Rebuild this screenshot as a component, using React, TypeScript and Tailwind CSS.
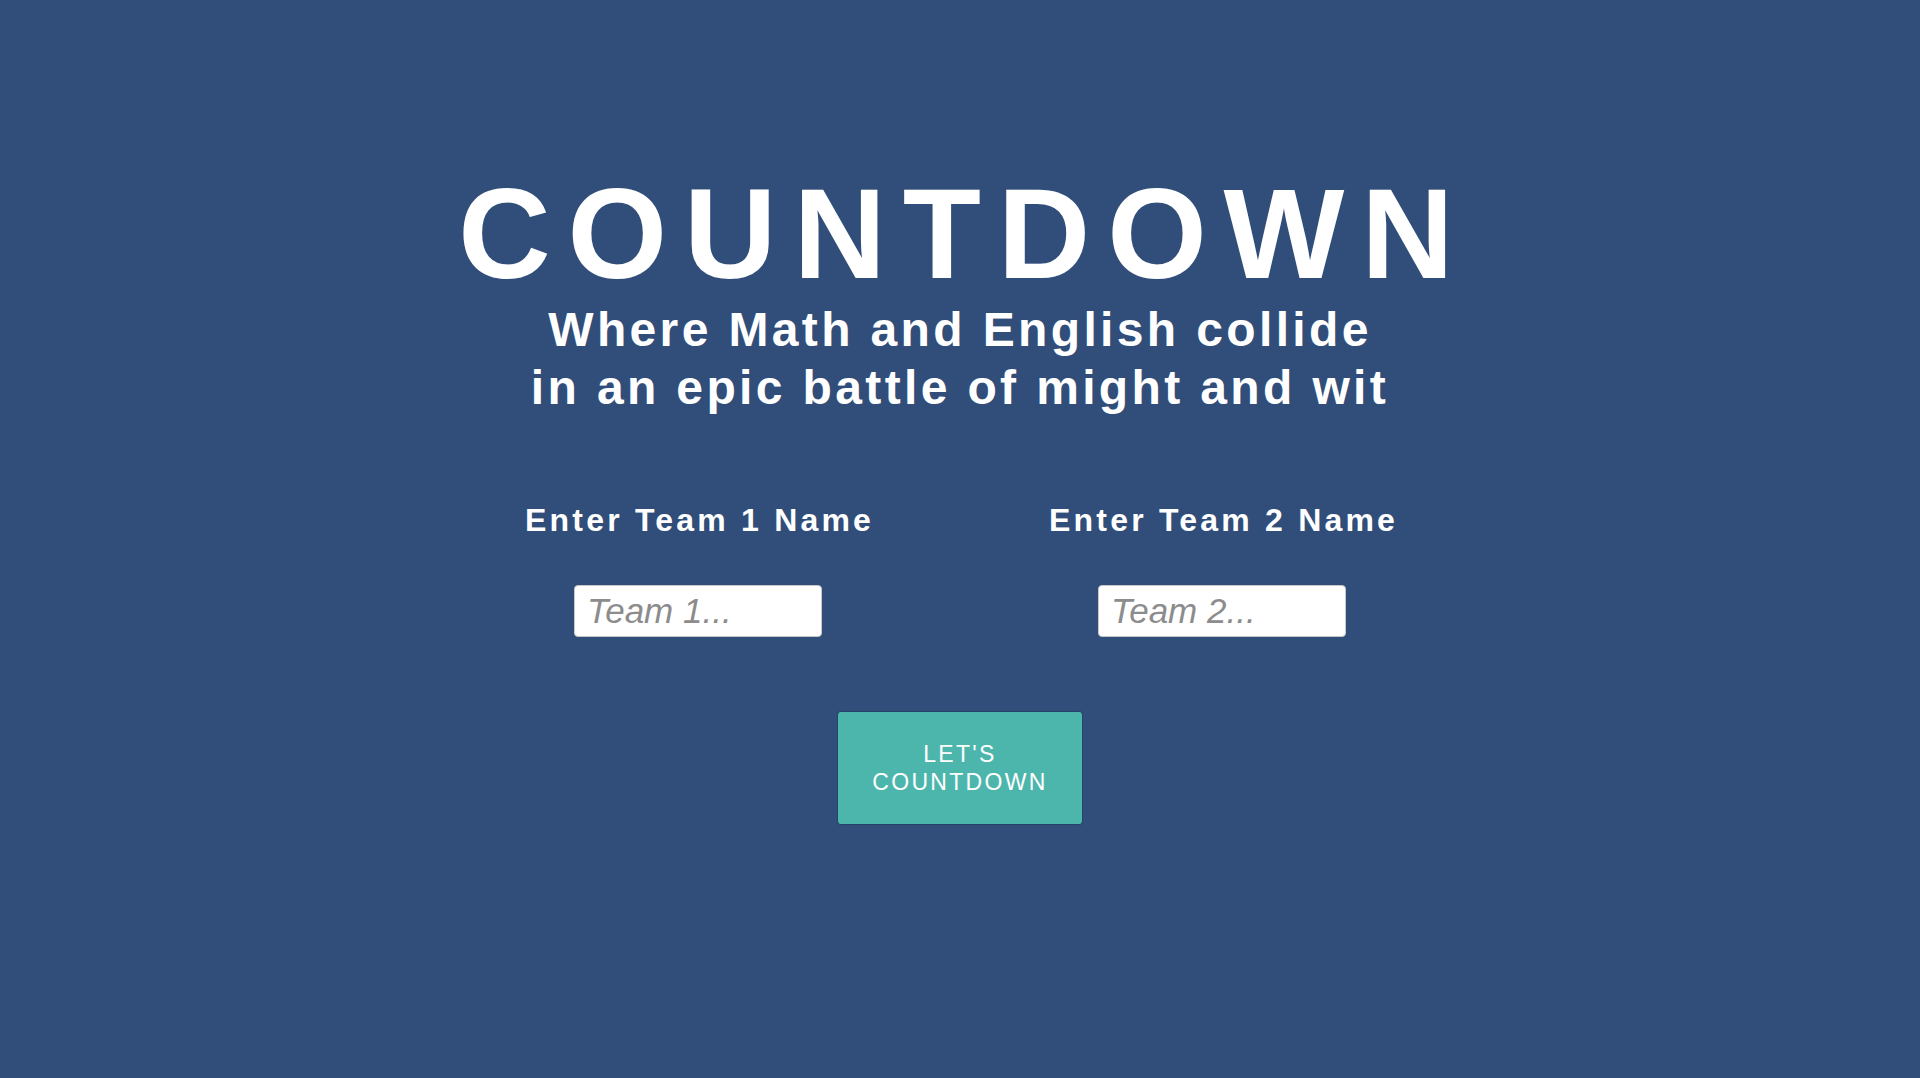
import React, { useState } from 'react';

const font = { fontFamily: '"Liberation Sans", Arial, sans-serif' };

function TeamField({ label, placeholder, value, onChange }: {
  label: string;
  placeholder: string;
  value: string;
  onChange: (v: string) => void;
}): JSX.Element {
  return (
    <div className="w-[524px] flex flex-col items-center">
      <label className="text-[32px] leading-none font-bold tracking-[0.1em] text-white pl-[0.1em]">
        {label}
      </label>
      <input
        className="mt-[49px] w-[248px] h-[52px] rounded-[4px] border border-[#c8c8c8] bg-white px-[12px] text-[35px] italic text-[#333] placeholder:text-[#8c8c8c] outline-none"
        style={font}
        placeholder={placeholder}
        value={value}
        onChange={e => onChange(e.target.value)}
      />
    </div>
  );
}

export default function App(): JSX.Element {
  const [team1, setTeam1] = useState('');
  const [team2, setTeam2] = useState('');

  return (
    <div className="min-h-[1078px] w-full bg-[#304e79] flex flex-col items-center" style={font}>
      <h1 className="mt-[170px] text-[128px] leading-none font-bold tracking-[0.132em] text-white pl-[0.07em]">
        COUNTDOWN
      </h1>
      <p className="mt-[3px] text-[48px] leading-[1.2] font-bold tracking-[0.07em] text-white text-center">
        Where Math and English collide
        <br />
        in an epic battle of might and wit
      </p>

      <div className="mt-[88px] flex">
        <TeamField label="Enter Team 1 Name" placeholder="Team 1..." value={team1} onChange={setTeam1} />
        <TeamField label="Enter Team 2 Name" placeholder="Team 2..." value={team2} onChange={setTeam2} />
      </div>

      <button className="mt-[75px] w-[244px] h-[112px] rounded-[3px] bg-[#4db6ac] shadow-[0_0_0_1px_rgba(0,0,0,0.15)] text-white text-[23px] leading-[28px] tracking-[0.1em] uppercase">
        Let's
        <br />
        Countdown
      </button>
    </div>
  );
}
